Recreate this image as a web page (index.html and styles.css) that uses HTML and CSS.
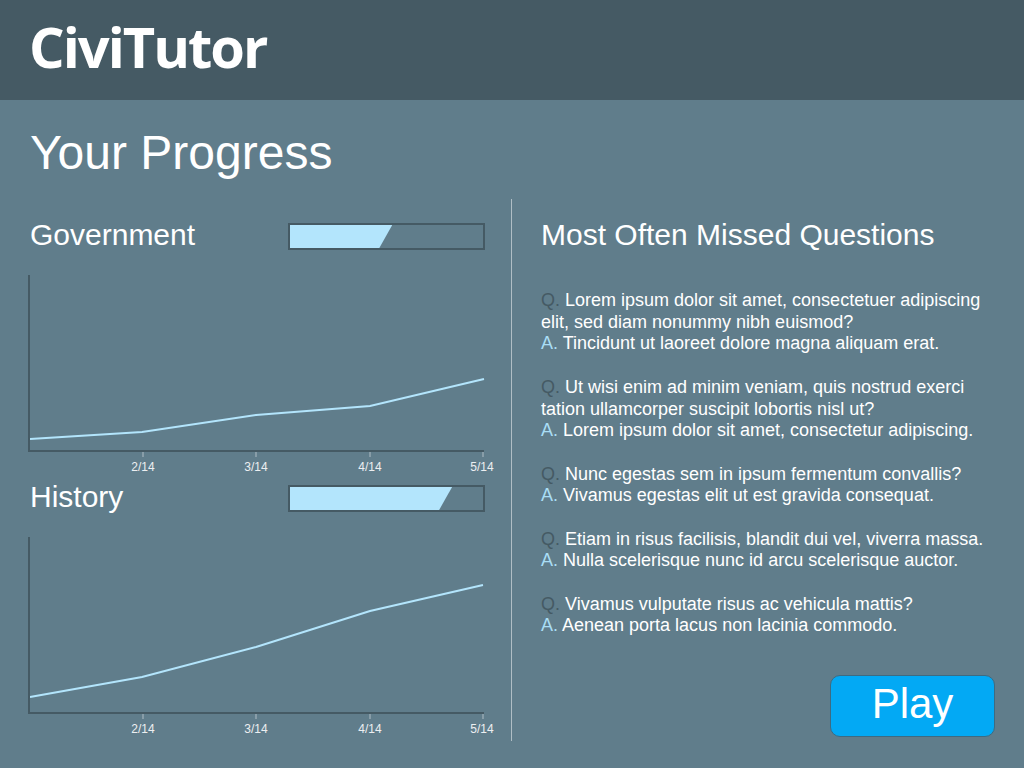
FILE: index.html
```html
<!DOCTYPE html>
<html>
<head>
<meta charset="utf-8">
<title>CiviTutor</title>
<link rel="stylesheet" href="styles.css">
</head>
<body>
<header class="topbar">
  <div class="logo">CiviTutor</div>
</header>
<main class="main">
  <h1 class="title">Your Progress</h1>
  <div class="columns">
    <section class="left">
      <div class="subject-row">
        <h2 class="subject">Government</h2>
        <div class="bar"><div class="bar-fill" style="width:53%"></div></div>
      </div>
      <svg class="chart" viewBox="0 0 470 200" width="470" height="200">
        <polyline class="trend" points="2,164 114,157 228,140 342,131 456,104"/>
        <path class="axis" d="M1,0 V176 H456"/>
        <path class="tick" d="M115,177 V182 M228,177 V182 M342,177 V182 M455,177 V182"/>
        <text class="lbl" x="115" y="196">2/14</text>
        <text class="lbl" x="228" y="196">3/14</text>
        <text class="lbl" x="342" y="196">4/14</text>
        <text class="lbl" x="454" y="196">5/14</text>
      </svg>
      <div class="subject-row second">
        <h2 class="subject">History</h2>
        <div class="bar"><div class="bar-fill" style="width:84%"></div></div>
      </div>
      <svg class="chart" viewBox="0 0 470 200" width="470" height="200">
        <polyline class="trend" points="2,160 114,140 228,110 342,74 455,48"/>
        <path class="axis" d="M1,0 V176 H456"/>
        <path class="tick" d="M115,177 V182 M228,177 V182 M342,177 V182 M455,177 V182"/>
        <text class="lbl" x="115" y="196">2/14</text>
        <text class="lbl" x="228" y="196">3/14</text>
        <text class="lbl" x="342" y="196">4/14</text>
        <text class="lbl" x="454" y="196">5/14</text>
      </svg>
    </section>
    <section class="right">
      <h2 class="missed-title">Most Often Missed Questions</h2>
      <div class="qa-list">
        <p class="qa"><span class="q">Q.</span> Lorem ipsum dolor sit amet, consectetuer adipiscing elit, sed diam nonummy nibh euismod?<br><span class="a">A.</span> Tincidunt ut laoreet dolore magna aliquam erat.</p>
        <p class="qa"><span class="q">Q.</span> Ut wisi enim ad minim veniam, quis nostrud exerci tation ullamcorper suscipit lobortis nisl ut?<br><span class="a">A.</span> Lorem ipsum dolor sit amet, consectetur adipiscing.</p>
        <p class="qa"><span class="q">Q.</span> Nunc egestas sem in ipsum fermentum convallis?<br><span class="a">A.</span> Vivamus egestas elit ut est gravida consequat.</p>
        <p class="qa"><span class="q">Q.</span> Etiam in risus facilisis, blandit dui vel, viverra massa.<br><span class="a">A.</span> Nulla scelerisque nunc id arcu scelerisque auctor.</p>
        <p class="qa"><span class="q">Q.</span> Vivamus vulputate risus ac vehicula mattis?<br><span class="a">A.</span> Aenean porta lacus non lacinia commodo.</p>
      </div>
      <button class="play">Play</button>
    </section>
  </div>
</main>
</body>
</html>
```
FILE: styles.css
```css
* { box-sizing: border-box; }
html, body { margin: 0; padding: 0; }
body {
  width: 1024px;
  height: 768px;
  overflow: hidden;
  background: #607d8b;
  color: #ffffff;
  font-family: "Liberation Sans", Arial, sans-serif;
}
.topbar {
  height: 100px;
  background: #455a64;
  padding: 0 29px;
}
.logo {
  font-family: "Open Sans", "Noto Sans", sans-serif;
  font-weight: 700;
  font-size: 56px;
  line-height: 93px;
  letter-spacing: -2px;
  color: #ffffff;
}
.main {
  padding: 25px 29px 0 30px;
}
.title {
  margin: 0;
  font-weight: 400;
  font-size: 48px;
  line-height: 56px;
}
.columns {
  display: flex;
  margin-top: 18px;
}
.left {
  width: 470px;
  margin-right: 11px;
  padding-top: 24px;
  padding-bottom: 4px;
}
.subject-row {
  width: 455px;
  height: 27px;
  display: flex;
  justify-content: space-between;
  align-items: flex-start;
}
.subject-row.second { margin-top: 10px; }
.subject {
  margin: 0;
  font-weight: 400;
  font-size: 30px;
  line-height: 23px;
}
.bar {
  width: 197px;
  height: 27px;
  border: 2px solid #455a64;
}
.bar-fill {
  height: 100%;
  background: #b3e5fc;
  clip-path: polygon(0 0, 100% 0, calc(100% - 13px) 100%, 0 100%);
}
.chart {
  display: block;
  margin-top: 25px;
  margin-left: -2px;
  overflow: visible;
}
.axis {
  fill: none;
  stroke: #455a64;
  stroke-width: 2;
}
.tick {
  fill: none;
  stroke: #b0bec5;
  stroke-width: 1;
}
.trend {
  fill: none;
  stroke: #b3e5fc;
  stroke-width: 2;
}
.lbl {
  fill: #eceff1;
  font-family: "Liberation Sans", Arial, sans-serif;
  font-size: 12px;
  text-anchor: middle;
}
.right {
  flex: 1;
  border-left: 1px solid #b0bec5;
  padding-left: 29px;
  padding-top: 18px;
  display: flex;
  flex-direction: column;
}
.missed-title {
  margin: 0;
  font-weight: 400;
  font-size: 30px;
  line-height: 36px;
}
.qa-list {
  margin-top: 37px;
}
.qa {
  margin: 0 0 21.7px 0;
  font-size: 18px;
  line-height: 21.7px;
}
.q { color: #455a64; }
.a { color: #a9ddf5; }
.play {
  margin-top: auto;
  margin-bottom: 4px;
  align-self: flex-end;
  width: 165px;
  height: 62px;
  border-radius: 10px;
  border: 1px solid #3d6b82;
  background: #03a9f4;
  color: #ffffff;
  font-family: "Liberation Sans", Arial, sans-serif;
  font-size: 42px;
  line-height: 50px;
  padding: 0 0 5px 0;
}
```
